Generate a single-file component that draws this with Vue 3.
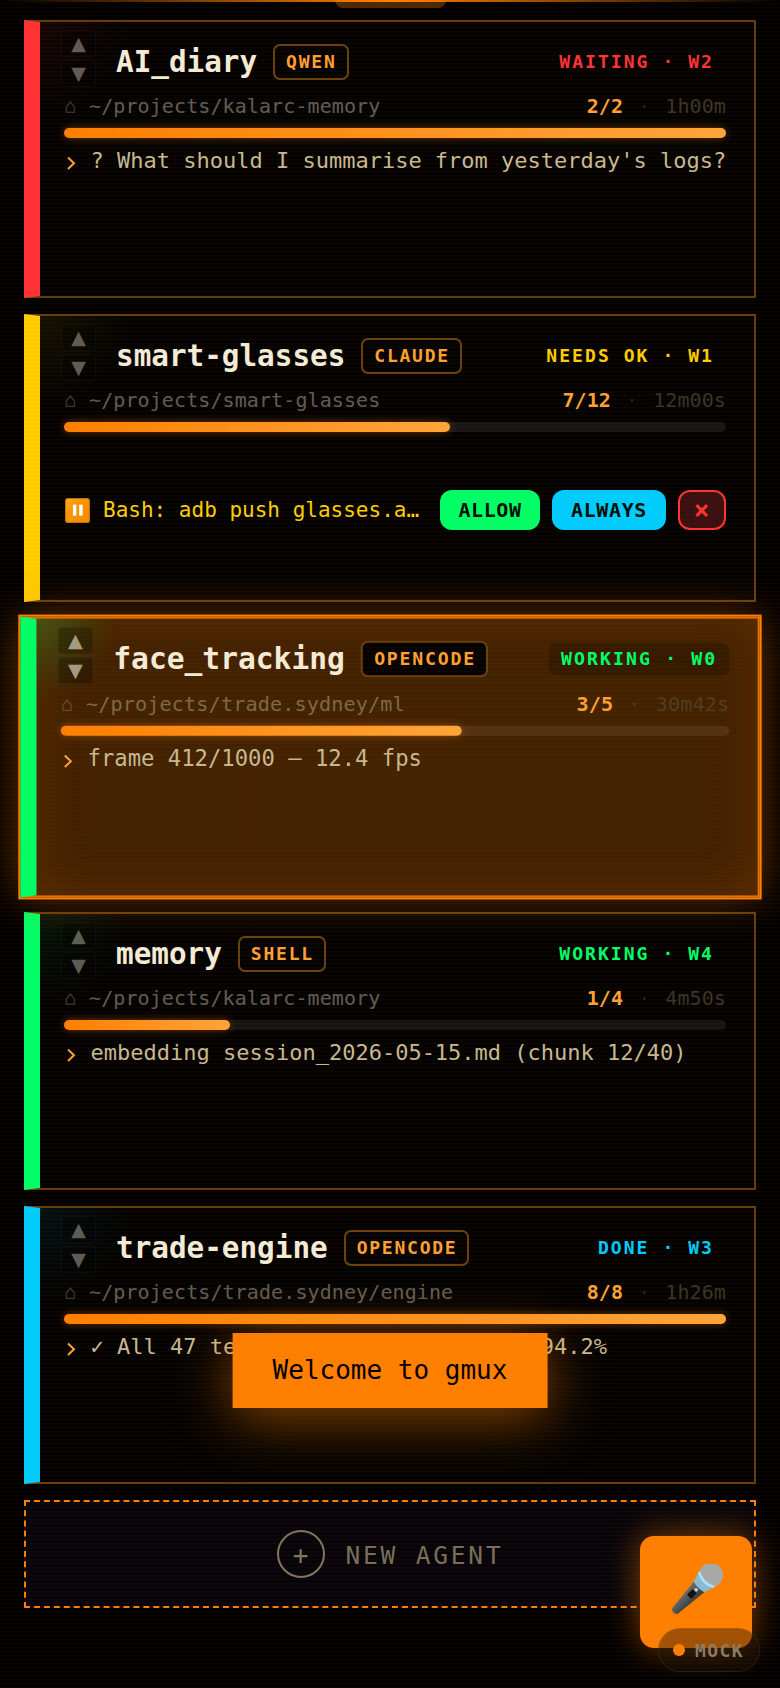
<template>
  <div class="page">
    <div class="top-line"></div>
    <div class="top-tab"></div>

    <div class="list">
      <div
        v-for="agent in agents"
        :key="agent.name"
        class="card"
        :class="[agent.state, { focused: agent.focused }]">
        <div class="reorder">
          <button class="move">▲</button>
          <button class="move">▼</button>
        </div>

        <div class="head">
          <span class="title">{{ agent.name }}</span>
          <span class="badge">{{ agent.tool }}</span>
          <span class="status">{{ agent.status }}</span>
        </div>

        <div class="meta">
          <span class="home">⌂</span>
          <span class="path">{{ agent.path }}</span>
          <span class="count">{{ agent.done }}/{{ agent.total }}</span>
          <span class="sep">·</span>
          <span class="time">{{ agent.time }}</span>
        </div>

        <div class="track">
          <div class="fill" :style="{ width: (agent.done / agent.total) * 100 + '%' }"></div>
        </div>

        <div v-if="agent.ask" class="ask">
          <svg class="pause" width="25" height="25" viewBox="0 0 24 24">
            <defs>
              <linearGradient id="pauseBg" x1="0" x2="1" y1="0" y2="1">
                <stop offset="0" stop-color="#fdb02c" />
                <stop offset="0.35" stop-color="#f99500" />
                <stop offset="1" stop-color="#f48c00" />
              </linearGradient>
            </defs>
            <rect x="0.5" y="0.5" width="23" height="23" rx="2.5" fill="url(#pauseBg)" stroke="#c96f00" />
            <rect x="7.6" y="6.4" width="3.3" height="10.6" fill="#fff" />
            <rect x="13.6" y="6.4" width="3.3" height="10.6" fill="#fff" />
          </svg>
          <span class="ask-text">{{ agent.ask }}</span>
          <button class="act allow">ALLOW</button>
          <button class="act always">ALWAYS</button>
          <button class="act deny">×</button>
        </div>
        <div v-else class="msg">
          <svg class="caret" width="13" height="14" viewBox="0 0 13 14">
            <path d="M4 1.5 L10 7.2 L4 13" fill="none" stroke="#ffa033" stroke-width="2" />
          </svg>
          <span>{{ agent.msg }}</span>
        </div>
      </div>

      <div class="new-agent">
        <span class="plus">+</span>
        <span class="new-label">NEW AGENT</span>
      </div>
    </div>

    <div class="toast">Welcome to gmux</div>

    <button class="mic">
      <svg width="56" height="56" viewBox="0 0 56 56">
        <defs>
          <linearGradient id="handle" x1="0" x2="1" y1="0" y2="0">
            <stop offset="0" stop-color="#6b7074" />
            <stop offset="1" stop-color="#34383b" />
          </linearGradient>
        </defs>
        <g transform="rotate(45 43 11)">
          <path d="M35.5 27 L50.5 27 L47 61 Q46.6 64 43 64 Q39.4 64 39 61 Z" fill="url(#handle)" />
          <rect x="40" y="34" width="6" height="8" rx="1" fill="#111" />
          <circle cx="43" cy="32" r="1.8" fill="#c9c9c9" />
          <circle cx="43" cy="11" r="12" fill="#a8a8a8" />
          <path d="M31.5 15 Q43 21 54.5 15 L50.5 28 Q43 30 35.5 28 Z" fill="#86bcd4" />
          <path d="M32 16 Q43 22 54 16 L53.4 19 Q43 24.5 32.6 19 Z" fill="#b5dff0" />
        </g>
      </svg>
    </button>

    <div class="mock"><span class="dot"></span>MOCK</div>

    <div class="scan"></div>
  </div>
</template>

<script setup>
  const agents = [
    {
      name: "AI_diary",
      tool: "QWEN",
      status: "WAITING · W2",
      state: "waiting",
      path: "~/projects/kalarc-memory",
      done: 2,
      total: 2,
      time: "1h00m",
      msg: "? What should I summarise from yesterday's logs?",
    },
    {
      name: "smart-glasses",
      tool: "CLAUDE",
      status: "NEEDS OK · W1",
      state: "needs",
      path: "~/projects/smart-glasses",
      done: 7,
      total: 12,
      time: "12m00s",
      ask: "Bash: adb push glasses.a…",
    },
    {
      name: "face_tracking",
      tool: "OPENCODE",
      status: "WORKING · W0",
      state: "working",
      focused: true,
      path: "~/projects/trade.sydney/ml",
      done: 3,
      total: 5,
      time: "30m42s",
      msg: "frame 412/1000 — 12.4 fps",
    },
    {
      name: "memory",
      tool: "SHELL",
      status: "WORKING · W4",
      state: "working",
      path: "~/projects/kalarc-memory",
      done: 1,
      total: 4,
      time: "4m50s",
      msg: "embedding session_2026-05-15.md (chunk 12/40)",
    },
    {
      name: "trade-engine",
      tool: "OPENCODE",
      status: "DONE · W3",
      state: "done",
      path: "~/projects/trade.sydney/engine",
      done: 8,
      total: 8,
      time: "1h26m",
      msg: "✓ All 47 tests passed — coverage: 94.2%",
    },
  ];
</script>

<style>
  html,
  body {
    background: #000;
  }
</style>

<style scoped>
  .page {
    position: relative;
    width: 780px;
    height: 1688px;
    overflow: hidden;
    background: #020100;
    font-family: "DejaVu Sans Mono", "Liberation Mono", monospace;
    color: #f5ecd7;
  }
  .top-line {
    position: absolute;
    top: 0;
    left: 0;
    right: 0;
    height: 2px;
    background: linear-gradient(90deg, transparent, #ff7f00 50%, transparent);
    z-index: 3;
  }
  .top-tab {
    position: absolute;
    top: 0;
    left: 335px;
    width: 111px;
    height: 8px;
    background: #4d2800;
    border-radius: 0 0 8px 8px;
  }
  .list {
    display: flex;
    flex-direction: column;
    gap: 16px;
    padding: 20px 24px 0;
  }

  .card {
    --accent: #ff3333;
    --tint: rgba(255, 51, 51, 0.07);
    position: relative;
    box-sizing: border-box;
    height: 278px;
    padding: 22px 28px 0 24px;
    border: 2px solid #663d0a;
    border-left: 16px solid var(--accent);
    background: radial-gradient(circle at 0 0, var(--tint), transparent 90px), #040302;
  }
  .card.waiting {
    --accent: #ff3333;
    --tint: rgba(255, 51, 51, 0.07);
  }
  .card.needs {
    --accent: #ffcc00;
    --tint: rgba(255, 204, 0, 0.07);
    height: 288px;
  }
  .card.working {
    --accent: #00ff66;
    --tint: rgba(0, 255, 102, 0.07);
  }
  .card.done {
    --accent: #00ccff;
    --tint: rgba(0, 204, 255, 0.07);
  }
  .card.focused {
    --tint: rgba(0, 255, 102, 0.2);
    z-index: 2;
    transform: scale(1.01);
    border-top-color: #e87000;
    border-right-color: #e87000;
    border-bottom-color: #e87000;
    background: radial-gradient(circle at 0 0, var(--tint), transparent 80px), #432200;
    box-shadow: 0 0 0 2px #ff7f00, 0 0 40px rgba(255, 127, 0, 0.42), inset 0 0 50px rgba(255, 127, 0, 0.12);
  }

  .reorder {
    position: absolute;
    top: 8px;
    left: 21px;
    display: flex;
    flex-direction: column;
    gap: 3px;
  }
  .move {
    width: 35px;
    height: 27px;
    padding: 0;
    border: 1px solid rgba(255, 255, 255, 0.035);
    border-radius: 4px;
    background: rgba(0, 0, 0, 0.25);
    color: rgba(245, 236, 215, 0.38);
    font-family: "DejaVu Sans", sans-serif;
    font-size: 19px;
    line-height: 25px;
  }
  .focused .move {
    color: rgba(245, 236, 215, 0.62);
  }

  .head {
    display: flex;
    align-items: center;
    gap: 16px;
    height: 36px;
    padding-left: 52px;
  }
  .title {
    margin-top: -1px;
    font-size: 29.3px;
    font-weight: 700;
    line-height: 36px;
  }
  .badge {
    box-sizing: border-box;
    height: 36px;
    padding: 0 10px 0 11px;
    border: 2px solid #6b420f;
    border-radius: 7px;
    background: #060402;
    color: #ffa033;
    font-size: 18px;
    font-weight: 700;
    line-height: 32px;
    letter-spacing: 1.76px;
  }
  .status {
    margin-left: auto;
    padding: 4px 12px;
    border-radius: 7px;
    color: var(--accent);
    font-size: 18px;
    font-weight: 700;
    line-height: 24px;
    letter-spacing: 2.06px;
  }
  .focused .status {
    background: rgba(0, 0, 0, 0.2);
  }

  .meta {
    display: flex;
    align-items: center;
    height: 24px;
    margin-top: 14px;
    font-size: 20px;
    line-height: 24px;
    letter-spacing: 0.1px;
  }
  .home {
    width: 12px;
    margin-right: 13px;
    color: rgba(245, 236, 215, 0.24);
  }
  .path {
    flex: 1;
    color: rgba(245, 236, 215, 0.4);
  }
  .count {
    color: #ffa033;
    font-weight: 700;
  }
  .sep {
    margin: 0 15px;
    color: rgba(245, 236, 215, 0.14);
  }
  .time {
    color: #3c3326;
  }
  .focused .home {
    color: #5e4a2a;
  }
  .focused .path {
    color: #7d6948;
  }
  .focused .time {
    color: #503c22;
  }

  .track {
    height: 10px;
    margin-top: 10px;
    border-radius: 5px;
    background: rgba(255, 255, 255, 0.08);
  }
  .fill {
    height: 100%;
    border-radius: 5px;
    background: linear-gradient(90deg, #ff7f00, #ffa53a);
    box-shadow: 0 0 8px rgba(255, 127, 0, 0.4);
  }

  .msg {
    display: flex;
    align-items: center;
    gap: 13.5px;
    margin-top: 9px;
    color: #c8b890;
    font-size: 22px;
    line-height: 28px;
    white-space: nowrap;
  }
  .caret {
    flex: none;
    margin-top: 3px;
  }

  .ask {
    display: flex;
    align-items: center;
    height: 40px;
    margin-top: 58px;
  }
  .pause {
    flex: none;
    margin-left: 1px;
  }
  .ask-text {
    flex: 1;
    margin-left: 13px;
    color: #ffcc00;
    font-size: 21px;
    white-space: nowrap;
  }
  .act {
    box-sizing: border-box;
    height: 40px;
    margin-left: 12px;
    padding: 0;
    border: none;
    border-radius: 12px;
    color: #021006;
    font-family: "DejaVu Sans Mono", monospace;
    font-size: 20px;
    font-weight: 700;
    letter-spacing: 0.6px;
  }
  .allow {
    width: 100px;
    background: #00ff66;
  }
  .always {
    width: 114px;
    background: #00ccff;
  }
  .deny {
    width: 48px;
    border: 2px solid #ff3333;
    background: #3a1010;
    color: #ff3333;
    font-size: 26px;
    line-height: 1;
  }

  .new-agent {
    display: flex;
    align-items: center;
    justify-content: center;
    gap: 21px;
    box-sizing: border-box;
    height: 108px;
    border: 2px dashed #ff7f00;
    background: #07050a;
  }
  .plus {
    box-sizing: border-box;
    width: 48px;
    height: 48px;
    border: 2px solid #82745f;
    border-radius: 50%;
    color: #82745f;
    font-size: 26px;
    line-height: 46px;
    text-align: center;
  }
  .new-label {
    padding-top: 3px;
    color: #7a6d5a;
    font-size: 24.5px;
    letter-spacing: 2.8px;
  }

  .toast {
    position: absolute;
    top: 1333px;
    left: 50%;
    transform: translateX(-50%);
    z-index: 4;
    padding: 0 40px;
    background: #ff7f00;
    color: #000;
    font-size: 26px;
    line-height: 75px;
    white-space: nowrap;
    box-shadow: 0 10px 56px rgba(255, 127, 0, 0.52);
  }

  .mic {
    position: absolute;
    top: 1536px;
    left: 640px;
    z-index: 4;
    display: flex;
    align-items: center;
    justify-content: center;
    width: 112px;
    height: 112px;
    padding: 0;
    border: none;
    border-radius: 14px;
    background: #ff7f00;
    box-shadow: 0 0 34px rgba(255, 127, 0, 0.5);
  }
  .mock {
    position: absolute;
    top: 1628px;
    left: 658px;
    z-index: 5;
    display: flex;
    align-items: center;
    box-sizing: border-box;
    width: 102px;
    height: 44px;
    padding-left: 14px;
    border: 1px solid rgba(255, 255, 255, 0.07);
    border-radius: 22px;
    background: rgba(30, 20, 10, 0.42);
    color: #8a7d66;
    font-size: 18px;
    font-weight: 700;
    letter-spacing: 1.4px;
  }
  .dot {
    flex: none;
    width: 12px;
    height: 12px;
    margin-right: 10px;
    border-radius: 50%;
    background: #ff7f00;
  }

  .scan {
    position: absolute;
    inset: 0;
    z-index: 6;
    pointer-events: none;
    background: repeating-linear-gradient(
      to bottom,
      transparent 0 3px,
      rgba(255, 110, 0, 0.035) 3px 4px
    );
  }
</style>
